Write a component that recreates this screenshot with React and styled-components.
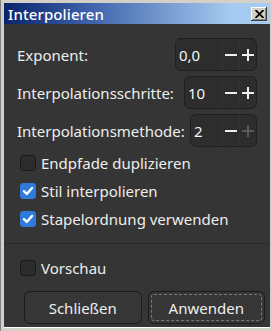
import React, { useState } from 'react'
import styled, { createGlobalStyle } from 'styled-components'

const Global = createGlobalStyle`
  html, body {
    margin: 0;
    padding: 0;
    background: #d4d0c8;
  }
  * {
    box-sizing: border-box;
  }
`

const Window = styled.div`
  width: 272px;
  height: 331px;
  background: #d4d0c8;
  padding: 3px 2px 3px 3px;
  display: flex;
  flex-direction: column;
  border-left: 1px solid #808080;
  font-family: 'Noto Sans', 'Open Sans', sans-serif;
`

const TitleBar = styled.div`
  height: 21px;
  flex: none;
  display: flex;
  align-items: center;
  justify-content: space-between;
  padding: 0 3px 0 4px;
  background: linear-gradient(to right, #0a246a 0%, #3a5ea8 30%, #a6caf0 85%, #a6caf0 100%);
`

const Title = styled.span`
  color: #ffffff;
  font-size: 15px;
  font-weight: 500;
  letter-spacing: 0.1px;
`

const CloseButton = styled.button`
  width: 16px;
  height: 14px;
  padding: 0;
  margin: 0;
  background: #d4d0c8;
  border: none;
  box-shadow: inset -1px -1px #404040, inset 1px 1px #ffffff, inset -2px -2px #808080;
  display: flex;
  align-items: center;
  justify-content: center;
`

const Body = styled.div`
  flex: 1;
  background: #353535;
  color: #eeeeec;
  padding: 14px 13px 3px 13px;
  display: flex;
  flex-direction: column;
  box-shadow: 0 1px 0 #ffffff;
  margin-bottom: 1px;
`

const FieldRow = styled.div`
  display: flex;
  align-items: center;
  justify-content: space-between;
  height: 33px;
  margin-bottom: 5px;
  padding-left: 0;

  &:nth-child(3) {
    margin-bottom: 2px;
  }
`

const Label = styled.span`
  font-size: 15px;
  white-space: nowrap;
`

const Spin = styled.div`
  width: ${(p) => p.$width}px;
  height: 33px;
  display: flex;
  align-items: stretch;
  background: #2d2d2d;
  border: 1px solid #1f1f1f;
  border-radius: 6px;
  overflow: hidden;
`

const SpinValue = styled.span`
  flex: 1;
  display: flex;
  align-items: center;
  padding-left: 3px;
  font-size: 15px;
  color: #f4f4f4;
`

const SpinButton = styled.span`
  width: 17px;
  display: flex;
  align-items: center;
  justify-content: center;
  border-left: 1px solid #333333;
  color: ${(p) => (p.$disabled ? '#5a5a5a' : '#f0f0f0')};
`

const CheckRow = styled.label`
  display: flex;
  align-items: center;
  gap: 5px;
  height: 28px;
  padding-left: 3px;
  font-size: 15px;
`

const Box = styled.span`
  width: 16px;
  height: 16px;
  border-radius: 3px;
  display: flex;
  align-items: center;
  justify-content: center;
  background: ${(p) => (p.$checked ? '#2f7bdc' : '#2c2c2c')};
  border: 1px solid ${(p) => (p.$checked ? '#2f7bdc' : '#1b1b1b')};
`

const Separator = styled.div`
  height: 1px;
  background: #2b2b2b;
  margin: 10px -13px 10px -13px;
`

const Buttons = styled.div`
  display: flex;
  gap: 6px;
  margin-top: 9px;
  margin-right: -8px;
  padding-left: 7px;
`

const Button = styled.button`
  flex: 1;
  height: 33px;
  background: #363636;
  border: 1px solid #1c1c1c;
  border-radius: 6px;
  color: #eeeeec;
  font-family: 'Noto Sans', 'Open Sans', sans-serif;
  font-size: 15px;
  padding: 0;
  outline: ${(p) => (p.$focused ? '1px dashed #7a7a7a' : 'none')};
  outline-offset: -4px;
`

const Minus = () => (
  <svg width="12" height="13" viewBox="0 0 12 13">
    <rect x="0" y="6" width="12" height="2" fill="currentColor" />
  </svg>
)

const Plus = () => (
  <svg width="12" height="13" viewBox="0 0 12 13">
    <rect x="0" y="6" width="12" height="2" fill="currentColor" />
    <rect x="5" y="1" width="2" height="12" fill="currentColor" />
  </svg>
)

const Check = () => (
  <svg width="12" height="12" viewBox="0 0 12 12">
    <path d="M2 6.2 L4.8 9 L10 3" stroke="#fff" strokeWidth="2.4" fill="none" strokeLinecap="round" strokeLinejoin="round" />
  </svg>
)

const SpinBox = ({ value, width, plusDisabled }) => (
  <Spin $width={width}>
    <SpinValue>{value}</SpinValue>
    <SpinButton>
      <Minus />
    </SpinButton>
    <SpinButton $disabled={plusDisabled}>
      <Plus />
    </SpinButton>
  </Spin>
)

const CheckBox = ({ label, checked }) => (
  <CheckRow>
    <Box $checked={checked}>{checked && <Check />}</Box>
    <span>{label}</span>
  </CheckRow>
)

const App = () => {
  const [fields] = useState([
    { label: 'Exponent:', value: '0,0', width: 82 },
    { label: 'Interpolationsschritte:', value: '10', width: 73 },
    { label: 'Interpolationsmethode:', value: '2', width: 67, plusDisabled: true },
  ])

  return (
    <>
      <Global />
      <Window>
        <TitleBar>
          <Title>Interpolieren</Title>
          <CloseButton>
            <svg width="9" height="8" viewBox="0 0 9 8">
              <path d="M0.5 0 L8.5 8 M8.5 0 L0.5 8" stroke="#000" strokeWidth="1.8" />
            </svg>
          </CloseButton>
        </TitleBar>
        <Body>
          {fields.map((f) => (
            <FieldRow key={f.label}>
              <Label>{f.label}</Label>
              <SpinBox value={f.value} width={f.width} plusDisabled={f.plusDisabled} />
            </FieldRow>
          ))}
          <CheckBox label="Endpfade duplizieren" />
          <CheckBox label="Stil interpolieren" checked />
          <CheckBox label="Stapelordnung verwenden" checked />
          <Separator />
          <CheckBox label="Vorschau" />
          <Buttons>
            <Button>Schließen</Button>
            <Button $focused>Anwenden</Button>
          </Buttons>
        </Body>
      </Window>
    </>
  )
}

export default App
